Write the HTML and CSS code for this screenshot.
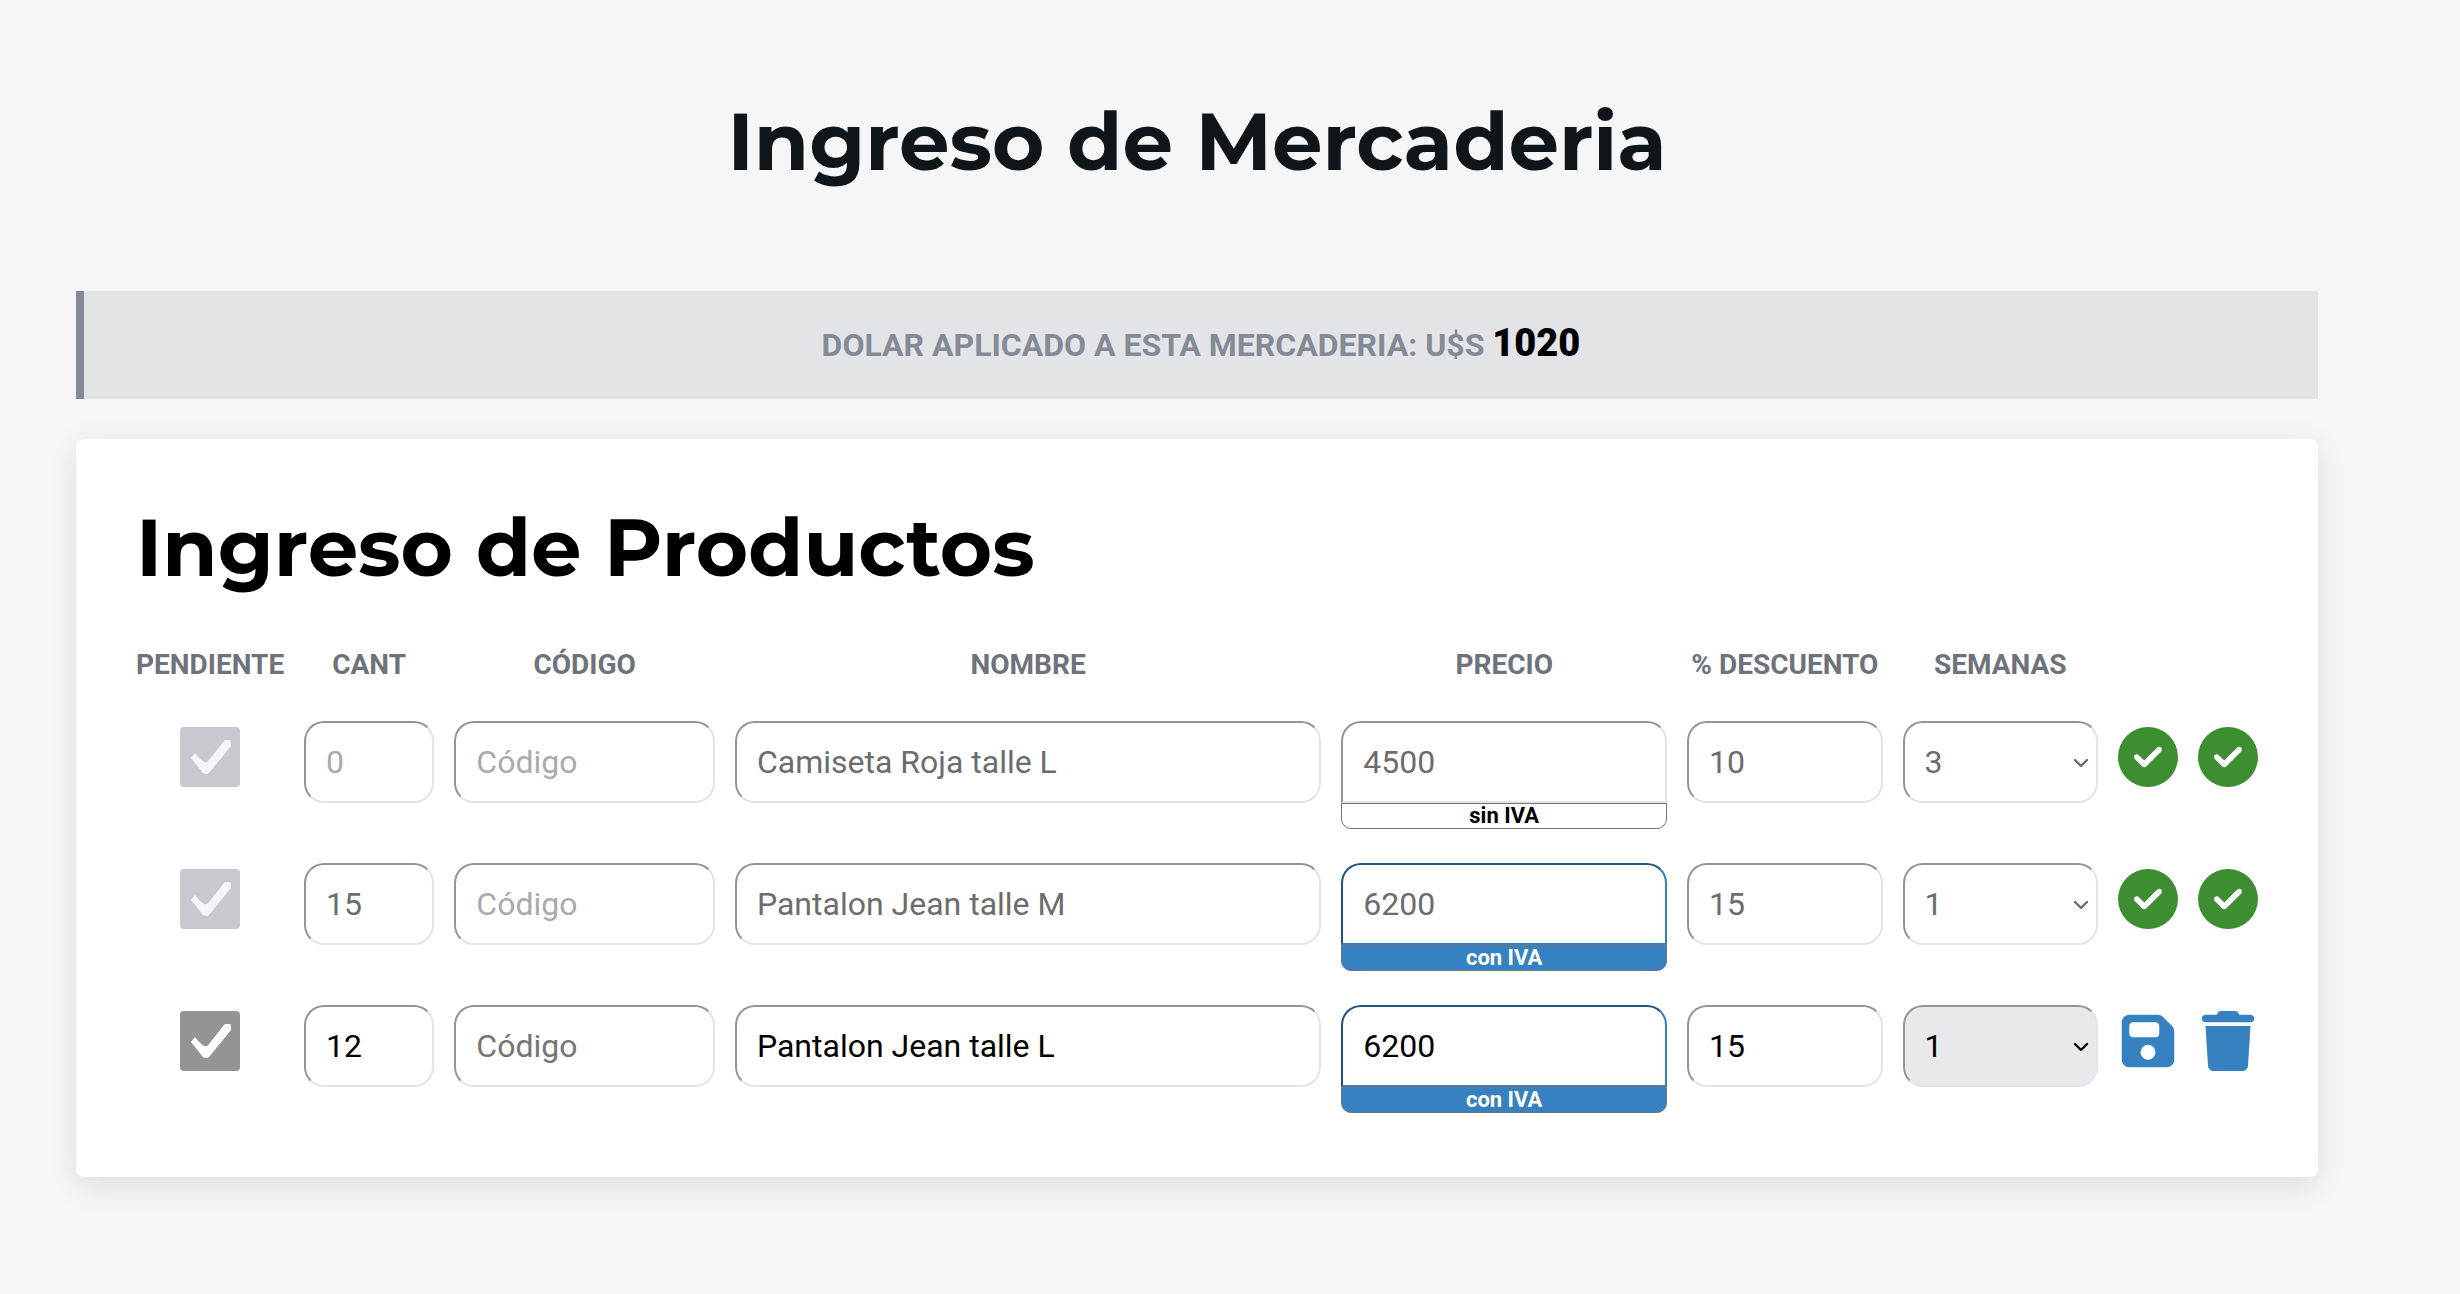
FILE: index.html
```html
<!DOCTYPE html>
<html lang="es">
<head>
<meta charset="utf-8">
<meta name="viewport" content="width=device-width, initial-scale=1">
<title>Ingreso de Mercaderia</title>
<link rel="stylesheet" href="styles.css">
</head>
<body>
<svg class="sprite" aria-hidden="true">
  <symbol id="check" viewBox="0 0 512 512"><path d="M256 512A256 256 0 1 0 256 0a256 256 0 1 0 0 512zM369 209L241 337c-9.4 9.4-24.6 9.4-33.9 0l-64-64c-9.4-9.4-9.4-24.6 0-33.9s24.6-9.4 33.9 0l47 47L335 175c9.4-9.4 24.6-9.4 33.9 0s9.4 24.6 0 33.9z"/></symbol>
  <symbol id="save" viewBox="0 0 448 512"><path d="M64 32C28.7 32 0 60.7 0 96V416c0 35.3 28.7 64 64 64H384c35.3 0 64-28.7 64-64V173.3c0-17-6.7-33.3-18.7-45.3L352 50.7C340 38.7 323.7 32 306.7 32H64zm0 96c0-17.7 14.3-32 32-32H288c17.7 0 32 14.3 32 32v64c0 17.7-14.3 32-32 32H96c-17.7 0-32-14.3-32-32V128zM224 288a64 64 0 1 1 0 128 64 64 0 1 1 0-128z"/></symbol>
  <symbol id="trash" viewBox="0 0 448 512"><path d="M135.2 17.7L128 32H32C14.3 32 0 46.3 0 64S14.3 96 32 96H416c17.7 0 32-14.3 32-32s-14.3-32-32-32H320l-7.2-14.3C307.4 6.8 296.3 0 284.2 0H163.8c-12.1 0-23.2 6.8-28.6 17.7zM416 128H32L53.2 467c1.6 25.3 22.6 45 47.9 45H346.9c25.3 0 46.3-19.7 47.9-45L416 128z"/></symbol>
  <symbol id="tick" viewBox="0 0 60 60"><path d="M11 31L15 26Q19 32 24 35Q27 36 29 33L44 14Q45 13 46 13H49Q51 13 51 15V19L29 46Q28 47 27 47H25Q24 47 23 46Z"/></symbol>
  <symbol id="chevron" viewBox="0 0 16 10"><path d="M2 2l6 6 6-6" fill="none" stroke="currentColor" stroke-width="2.4" stroke-linecap="round" stroke-linejoin="round"/></symbol>
</svg>
<main class="page">
  <h1 class="title">Ingreso de Mercaderia</h1>
  <p class="rate">DOLAR APLICADO A ESTA MERCADERIA: U$S <strong class="rate-value">1020</strong></p>
  <section class="card">
    <h2 class="card-title">Ingreso de Productos</h2>
    <table class="products">
      <thead>
        <tr class="row head">
          <th>PENDIENTE</th><th>CANT</th><th>CÓDIGO</th><th>NOMBRE</th><th>PRECIO</th><th>% DESCUENTO</th><th>SEMANAS</th>
        </tr>
      </thead>
      <tbody>
        <tr class="row">
          <td class="pending"><input class="tick-input" type="checkbox" aria-label="Pendiente" checked disabled><svg class="tick"><use href="#tick"/></svg></td>
          <td><input class="field" type="text" aria-label="Cantidad" placeholder="0" disabled></td>
          <td><input class="field" type="text" aria-label="Código" placeholder="Código" disabled></td>
          <td><input class="field" type="text" aria-label="Nombre" value="Camiseta Roja talle L" disabled></td>
          <td><input class="field price" type="text" aria-label="Precio" value="4500" disabled><button class="iva" type="button">sin IVA</button></td>
          <td><input class="field" type="text" aria-label="Descuento" value="10" disabled></td>
          <td class="weeks"><select class="field select" aria-label="Semanas" disabled><option>3</option></select><svg class="chevron"><use href="#chevron"/></svg></td>
          <td><button class="action done" type="button" aria-label="Guardado"><svg class="icon"><use href="#check"/></svg></button></td>
          <td><button class="action done" type="button" aria-label="Confirmado"><svg class="icon"><use href="#check"/></svg></button></td>
        </tr>
        <tr class="row">
          <td class="pending"><input class="tick-input" type="checkbox" aria-label="Pendiente" checked disabled><svg class="tick"><use href="#tick"/></svg></td>
          <td><input class="field" type="text" aria-label="Cantidad" value="15" disabled></td>
          <td><input class="field" type="text" aria-label="Código" placeholder="Código" disabled></td>
          <td><input class="field" type="text" aria-label="Nombre" value="Pantalon Jean talle M" disabled></td>
          <td><input class="field price with-iva" type="text" aria-label="Precio" value="6200" disabled><button class="iva iva-on" type="button">con IVA</button></td>
          <td><input class="field" type="text" aria-label="Descuento" value="15" disabled></td>
          <td class="weeks"><select class="field select" aria-label="Semanas" disabled><option>1</option></select><svg class="chevron"><use href="#chevron"/></svg></td>
          <td><button class="action done" type="button" aria-label="Guardado"><svg class="icon"><use href="#check"/></svg></button></td>
          <td><button class="action done" type="button" aria-label="Confirmado"><svg class="icon"><use href="#check"/></svg></button></td>
        </tr>
        <tr class="row">
          <td class="pending"><input class="tick-input" type="checkbox" aria-label="Pendiente" checked><svg class="tick"><use href="#tick"/></svg></td>
          <td><input class="field" type="text" aria-label="Cantidad" value="12"></td>
          <td><input class="field" type="text" aria-label="Código" placeholder="Código"></td>
          <td><input class="field" type="text" aria-label="Nombre" value="Pantalon Jean talle L"></td>
          <td><input class="field price with-iva" type="text" aria-label="Precio" value="6200"><button class="iva iva-on" type="button">con IVA</button></td>
          <td><input class="field" type="text" aria-label="Descuento" value="15"></td>
          <td class="weeks"><select class="field select" aria-label="Semanas"><option>1</option><option>2</option><option>3</option></select><svg class="chevron"><use href="#chevron"/></svg></td>
          <td><button class="action" type="button" aria-label="Guardar"><svg class="icon"><use href="#save"/></svg></button></td>
          <td><button class="action" type="button" aria-label="Eliminar"><svg class="icon"><use href="#trash"/></svg></button></td>
        </tr>
      </tbody>
    </table>
  </section>
</main>
</body>
</html>
```
FILE: styles.css
```css
* {
  box-sizing: border-box;
}

body {
  margin: 0;
  background: #f6f6f6;
  color: #000;
  font-family: Roboto, "Liberation Sans", sans-serif;
}

.sprite {
  display: none;
}

.page {
  padding: 92px 142px 92px 76px;
}

.title,
.card-title {
  margin: 0;
  font-family: Montserrat, Inter, sans-serif;
  font-size: 80px;
  font-weight: 700;
  line-height: 100px;
}

.title {
  color: #101519;
  text-align: center;
}

.rate {
  margin: 99px 0 40px;
  border-left: 8px solid #848b98;
  background: #e2e4e8;
  color: #848b95;
  font-size: 32px;
  font-weight: 700;
  line-height: 108px;
  text-align: center;
}

.rate-value {
  color: #000;
  font-size: 38px;
  line-height: 1;
}

.card {
  padding: 59px 60px 64px;
  border-radius: 8px;
  background: #fff;
  box-shadow: 0 8px 32px rgba(0, 0, 0, 0.1);
}

.products {
  display: block;
  margin-top: 49px;
}

.products tbody {
  display: grid;
  gap: 34px;
}

.products thead {
  display: block;
}

.row {
  display: grid;
  grid-template-columns: 148px 2fr 4fr 9fr 5fr 3fr 3fr 60px 60px;
  gap: 20px;
}

.head {
  margin-bottom: 38px;
}

th {
  padding: 0;
  color: #6e727a;
  font-size: 28px;
  line-height: 36px;
  text-align: center;
  white-space: nowrap;
}

td {
  display: flex;
  flex-direction: column;
  padding: 0;
  min-width: 0;
}

.field {
  width: 100%;
  height: 82px;
  margin: 0;
  padding: 0 20px;
  border: 2px solid;
  border-color: #949494 #e4e4e4 #e4e4e4 #949494;
  border-radius: 20px;
  background: #fff;
  color: #000;
  font: 32px Roboto, "Liberation Sans", sans-serif;
}

.field::placeholder {
  color: #757575;
  opacity: 1;
}

.field:disabled {
  color: #6c6c6c;
  opacity: 1;
}

.field:disabled::placeholder {
  color: #aaa;
}

.price {
  border-radius: 20px 20px 0 0;
}

.with-iva {
  border-color: #225480 #3682c1 #3682c1 #225480;
}

.iva {
  height: 26px;
  padding: 0;
  border: 1px solid #6e727a;
  border-radius: 0 0 10px 10px;
  background: #fff;
  color: #000;
  font: 700 22px/24px Roboto, "Liberation Sans", sans-serif;
}

.iva-on {
  background: #3682c1;
  color: #fff;
}

.weeks,
.pending {
  position: relative;
}

.select {
  appearance: none;
  background: #e9e9ed;
}

.select:disabled {
  background: #fff;
}

.chevron {
  position: absolute;
  top: 37px;
  right: 9px;
  width: 16px;
  height: 10px;
  pointer-events: none;
}

.field:disabled + .chevron {
  color: #6c6c6c;
}

.pending {
  align-items: center;
}

.tick-input {
  appearance: none;
  width: 60px;
  height: 60px;
  margin: 6px 0 0;
  border-radius: 4px;
  background: #949494;
}

.tick {
  position: absolute;
  top: 6px;
  width: 60px;
  height: 60px;
  fill: #fff;
  pointer-events: none;
}

.tick-input:disabled {
  background: #c8c8ce;
}

.tick-input:disabled + .tick {
  fill: #f4f4fa;
}

.action {
  display: flex;
  justify-content: center;
  width: 60px;
  height: 60px;
  margin: 6px 0 0;
  padding: 0;
  border: 0;
  background: none;
  color: #3682c1;
}

.done {
  color: #3d8e30;
}

.icon {
  width: 60px;
  height: 60px;
  fill: currentColor;
}
```
